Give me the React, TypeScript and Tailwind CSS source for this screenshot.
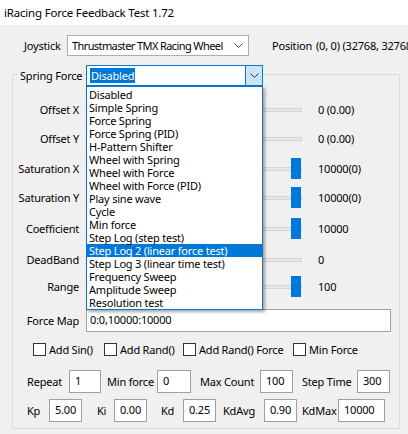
import React from 'react';

const font = { fontFamily: '"Noto Sans", "Liberation Sans", sans-serif', letterSpacing: '-0.2px' };

const items = [
  'Disabled',
  'Simple Spring',
  'Force Spring',
  'Force Spring (PID)',
  'H-Pattern Shifter',
  'Wheel with Spring',
  'Wheel with Force',
  'Wheel with Force (PID)',
  'Play sine wave',
  'Cycle',
  'Min force',
  'Step Log (step test)',
  'Step Log 2 (linear force test)',
  'Step Log 3 (linear time test)',
  'Frequency Sweep',
  'Amplitude Sweep',
  'Resolution test',
];

const Chevron = ({ color = '#444' }: { color?: string }) => (
  <svg width="9" height="5" viewBox="0 0 9 5" fill="none">
    <path d="M0.5 0.5 L4.5 4.5 L8.5 0.5" stroke={color} strokeWidth="1" />
  </svg>
);

const SliderRow = ({ label, value, thumb, mt }: { label: string; value: string; thumb: boolean; mt: string }) => (
  <div className={`flex items-center h-[22px] whitespace-nowrap ${mt}`}>
    <span className="w-[66px] shrink-0 text-right">{label}</span>
    <div className="relative ml-[7px] w-[216px] shrink-0 h-[22px] flex items-center">
      <div className="w-full h-[4px] bg-[#e7e7e7] border border-[#d6d6d6]" />
      {thumb && <div className="absolute left-[205px] top-0 w-[10px] h-[21px] bg-[#0078d7]" />}
    </div>
    <span className="ml-[16px]">{value}</span>
  </div>
);

const Box = ({ w, text }: { w: string; text: string }) => (
  <div className={`${w} shrink-0 h-[23px] bg-white border border-[#a0a0a0] pl-[5px] pt-[1px] leading-[18px]`}>{text}</div>
);

const Check = ({ w, label }: { w: string; label: string }) => (
  <div className={`${w} shrink-0 flex items-center`}>
    <div className="w-[13px] h-[13px] bg-white border border-[#333]" />
    <span className="ml-[3px]">{label}</span>
  </div>
);

export default function App() {
  return (
    <div className="w-[408px] h-[434px] bg-[#f0f0f0] overflow-hidden text-[11px] text-black leading-[16px]" style={font}>
      <div className="h-[25px] bg-white flex items-center pl-[4px] text-[11.5px]">iRacing Force Feedback Test 1.72</div>

      {/* Joystick row */}
      <div className="mt-[10px] h-[21px] flex items-center whitespace-nowrap">
        <span className="ml-[24px] w-[43px] shrink-0">Joystick</span>
        <div className="w-[182px] shrink-0 h-[21px] bg-white border border-[#adadad] flex items-center pl-[4px]">
          <span className="tracking-[-0.6px]">Thrustmaster TMX Racing Wheel</span>
          <div className="ml-auto mr-[5px]">
            <Chevron />
          </div>
        </div>
        <span className="ml-[23px] w-[44px] shrink-0">Position</span>
        <span className="shrink-0">(0, 0) (32768, 32768)</span>
      </div>

      {/* Group box */}
      <div className="mt-[18px] ml-[12px] w-[388px] h-[355px] border border-[#dcdcdc]">
        <div className="-mt-[10px] h-[21px] flex items-center whitespace-nowrap">
          <span className="ml-[5px] w-[61px] shrink-0 bg-[#f0f0f0] pl-[2px]">Spring Force</span>
          <div className="relative ml-[7px] w-[177px] shrink-0 h-[21px] bg-white border border-[#0078d7] flex items-center">
            <span className="ml-[3px] bg-[#0078d7] text-white px-[1px] leading-[15px]">Disabled</span>
            <div className="ml-auto w-[17px] h-full bg-[#cce4f7] border-l border-[#0078d7] flex items-center justify-center">
              <Chevron color="#333" />
            </div>
            {/* open list */}
            <div className="absolute -left-[1px] top-[20px] w-[177px] h-[224px] bg-white border border-[#0078d7] border-r-[#3a6a96] pt-[1px] shadow-[2px_2px_3px_rgba(0,0,0,0.35)] z-10">
              {items.map((it, i) => (
                <div
                  key={it}
                  className={`h-[13px] leading-[13px] pl-[2px] whitespace-nowrap ${i === 12 ? 'bg-[#0078d7] text-white' : ''}`}
                >
                  {it}
                </div>
              ))}
            </div>
          </div>
        </div>

        <SliderRow label="Offset X" value="0 (0.00)" thumb={false} mt="mt-[13px]" />
        <SliderRow label="Offset Y" value="0 (0.00)" thumb={false} mt="mt-[7px]" />
        <SliderRow label="Saturation X" value="10000(0)" thumb mt="mt-[8px]" />
        <SliderRow label="Saturation Y" value="10000(0)" thumb mt="mt-[7px]" />
        <SliderRow label="Coefficient" value="10000" thumb mt="mt-[9px]" />
        <SliderRow label="DeadBand" value="0" thumb={false} mt="mt-[9px]" />
        <SliderRow label="Range" value="100" thumb mt="mt-[5px]" />

        <div className="mt-[11px] flex items-center h-[23px] whitespace-nowrap">
          <span className="w-[66px] shrink-0 text-right">Force Map</span>
          <div className="ml-[7px] w-[305px] shrink-0 h-[23px] bg-white border border-[#a0a0a0] pl-[3px] leading-[18px] pt-[1px]">0:0,10000:10000</div>
        </div>

        <div className="mt-[11px] flex items-center h-[13px] pl-[20px] whitespace-nowrap">
          <Check w="w-[71px]" label="Add Sin()" />
          <Check w="w-[79px]" label="Add Rand()" />
          <Check w="w-[110px]" label="Add Rand() Force" />
          <Check w="w-[90px]" label="Min Force" />
        </div>

        <div className="mt-[14px] flex items-center h-[23px] pl-[14px] whitespace-nowrap">
          <span className="w-[42px] shrink-0">Repeat</span>
          <Box w="w-[32px]" text="1" />
          <span className="w-[56px] shrink-0 pl-[6px]">Min force</span>
          <Box w="w-[34px]" text="0" />
          <span className="w-[69px] shrink-0 pl-[9px]">Max Count</span>
          <Box w="w-[33px]" text="100" />
          <span className="w-[64px] shrink-0 pl-[9px]">Step Time</span>
          <Box w="w-[33px]" text="300" />
        </div>

        <div className="mt-[6px] flex items-center h-[23px] pl-[14px] whitespace-nowrap">
          <span className="w-[22px] shrink-0">Kp</span>
          <Box w="w-[33px]" text="5.00" />
          <span className="w-[32px] shrink-0 pl-[15px]">Ki</span>
          <Box w="w-[33px]" text="0.00" />
          <span className="w-[36px] shrink-0 pl-[14px]">Kd</span>
          <Box w="w-[33px]" text="0.25" />
          <span className="w-[48px] shrink-0 pl-[7px]">KdAvg</span>
          <Box w="w-[33px]" text="0.90" />
          <span className="w-[41px] shrink-0 pl-[5px]">KdMax</span>
          <Box w="w-[47px]" text="10000" />
        </div>
      </div>
    </div>
  );
}
